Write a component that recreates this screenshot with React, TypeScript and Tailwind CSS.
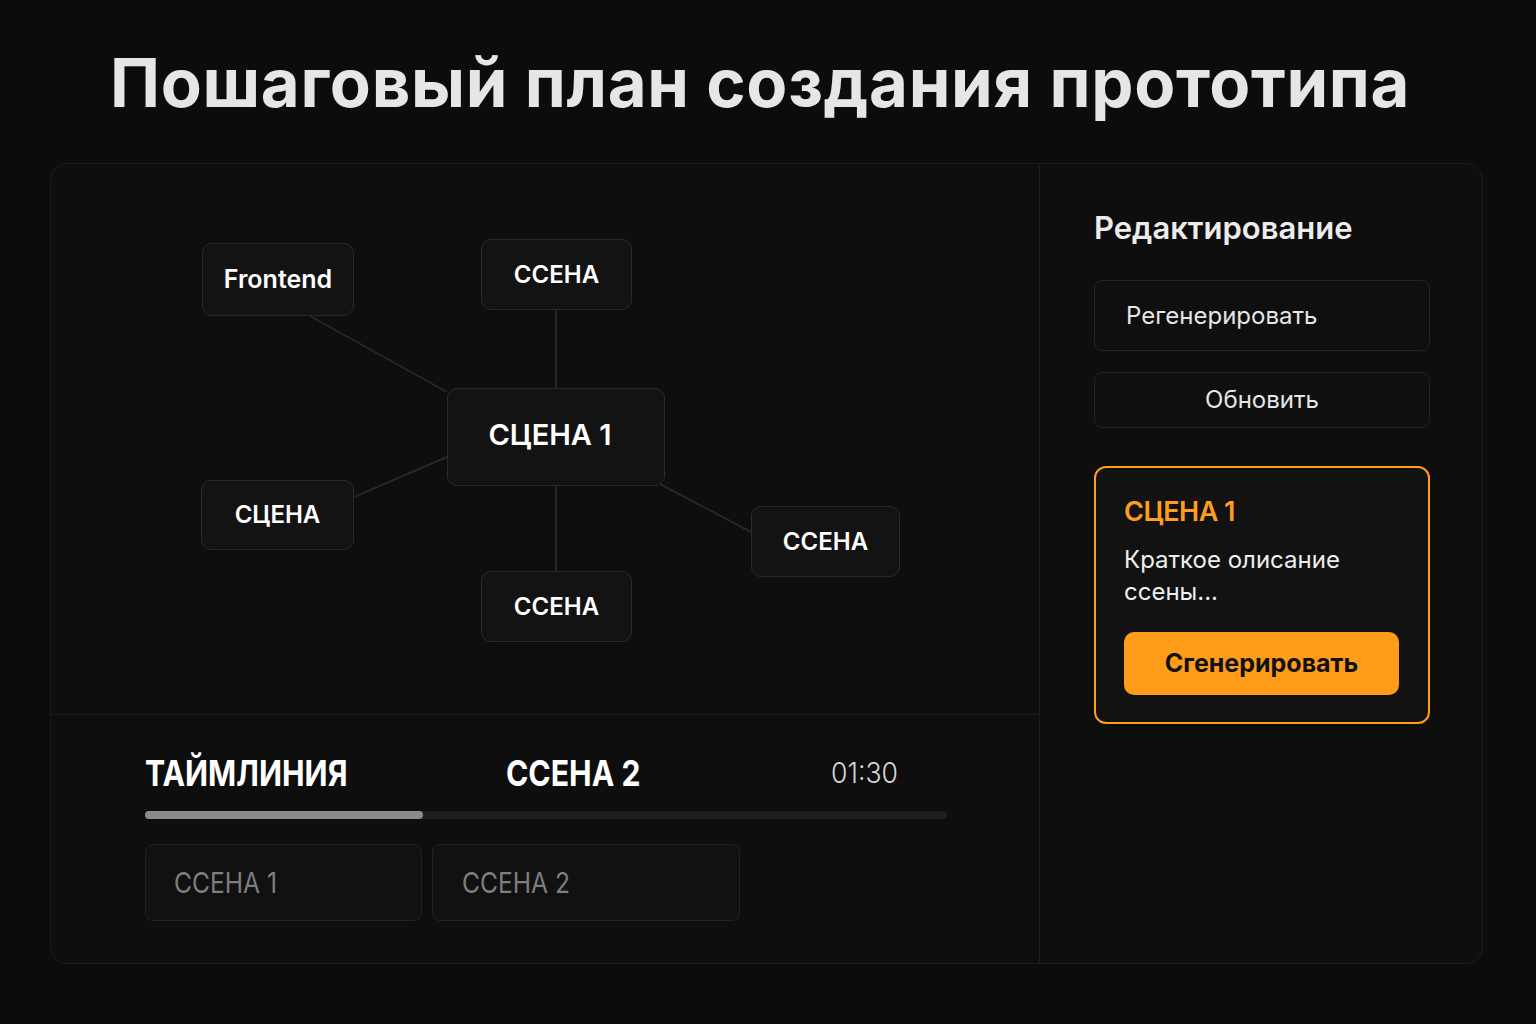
import React from "react";

const nodes = [
  { label: "Frontend", x: 151, y: 79, w: 152, h: 73, size: "text-[25px]" },
  { label: "ССЕНА", x: 430, y: 75, w: 151, h: 71, size: "text-[24px]" },
  { label: "СЦЕНА 1", x: 396, y: 224, w: 218, h: 98, size: "text-[29px] pb-[4px] pr-[12px]" },
  { label: "СЦЕНА", x: 150, y: 316, w: 153, h: 70, size: "text-[24px]" },
  { label: "ССЕНА", x: 700, y: 342, w: 149, h: 71, size: "text-[24px]" },
  { label: "ССЕНА", x: 430, y: 407, w: 151, h: 71, size: "text-[24px]" },
];

const links = [
  [259, 152, 396, 228],
  [505, 146, 505, 224],
  [303, 333, 396, 293],
  [609, 320, 700, 368],
  [505, 322, 505, 407],
];

export default function App() {
  return (
    <div className="min-h-[1024px] w-full bg-[#0c0c0c] pl-[50px] pr-[53px] font-['Inter','Noto_Sans',sans-serif] text-[#ececec]">
      <h1 className="pl-[60px] pt-[40px] pb-[38px] text-[67px] font-bold leading-[85px] tracking-[0.7px] text-[#e6e6e6]">
        Пошаговый план создания прототипа
      </h1>

      <div className="grid grid-cols-[989px_1fr] rounded-2xl border border-[#1c1c1c] bg-[#0e0e0e]">
        {/* Left: scene graph + timeline */}
        <div className="border-r border-[#1c1c1c]">
          <div className="relative h-[551px] border-b border-[#1c1c1c]">
            <svg className="absolute inset-0" width="989" height="551">
              {links.map(([x1, y1, x2, y2], i) => (
                <line key={i} x1={x1} y1={y1} x2={x2} y2={y2} stroke="#262626" strokeWidth="2" />
              ))}
            </svg>
            {nodes.map((n, i) => (
              <div
                key={i}
                className={`absolute flex items-center justify-center rounded-[10px] border border-[#2a2a2a] bg-[#131313] font-semibold text-white ${n.size}`}
                style={{ left: n.x, top: n.y, width: n.w, height: n.h }}
              >
                {n.label}
              </div>
            ))}
          </div>

          <div className="px-[94px] pt-[40px] pb-[42px]">
            <div className="flex items-center h-[36px]">
              <span className="w-[361px]">
                <span className="inline-block origin-left scale-x-[0.84] text-[36px] font-bold text-white">ТАЙМЛИНИЯ</span>
              </span>
              <span className="w-[325px]">
                <span className="inline-block origin-left scale-x-[0.84] text-[36px] font-bold text-white">ССЕНА 2</span>
              </span>
              <span className="inline-block origin-left scale-x-[0.95] text-[28px] font-light text-[#d8d8d8]">01:30</span>
            </div>
            <div className="mt-[20px] h-[8px] w-[802px] rounded-full bg-[#1f1f1f]">
              <div className="h-full w-[278px] rounded-full bg-[#8c8c8c]" />
            </div>
            <div className="mt-[25px] flex gap-[10px]">
              <div className="flex h-[77px] w-[277px] items-center rounded-[8px] border border-[#222] bg-[#111] pl-[28px] text-[#7e7e7e]">
                <span className="inline-block origin-left scale-x-[0.88] text-[28px]">ССЕНА 1</span>
              </div>
              <div className="flex h-[77px] w-[308px] items-center rounded-[8px] border border-[#222] bg-[#111] pl-[29px] text-[#7e7e7e]">
                <span className="inline-block origin-left scale-x-[0.88] text-[28px]">ССЕНА 2</span>
              </div>
            </div>
          </div>
        </div>

        {/* Right: edit panel */}
        <div className="pl-[54px] pr-[52px] pt-[44px]">
          <h2 className="text-[31px] font-semibold leading-[40px] text-[#ececec]">Редактирование</h2>
          <button className="mt-[32px] flex h-[71px] w-full items-center rounded-[8px] border border-[#232323] bg-[#0f0f0f] pl-[31px] text-[24px] text-[#e6e6e6]">
            Регенерировать
          </button>
          <button className="mt-[21px] flex h-[56px] w-full items-center justify-center rounded-[8px] border border-[#232323] bg-[#0f0f0f] text-[24px] text-[#e6e6e6]">
            Обновить
          </button>
          <div className="mt-[38px] rounded-[12px] border-2 border-[#ff9d1c] bg-[#121212] px-[28px] pt-[26px] pb-[27px]">
            <div className="text-[27px] font-semibold leading-[36px] tracking-[-0.5px] text-[#ff9d1c]">СЦЕНА 1</div>
            <p className="mt-[14px] text-[24px] leading-[32px] text-[#efefef]">
              Краткое олисание
              <br />
              ссены...
            </p>
            <button className="mt-[24px] flex h-[63px] w-[275px] items-center justify-center rounded-[10px] bg-[#ff9c19] text-[25px] font-bold text-[#111]">
              Сгенерировать
            </button>
          </div>
        </div>
      </div>
    </div>
  );
}
